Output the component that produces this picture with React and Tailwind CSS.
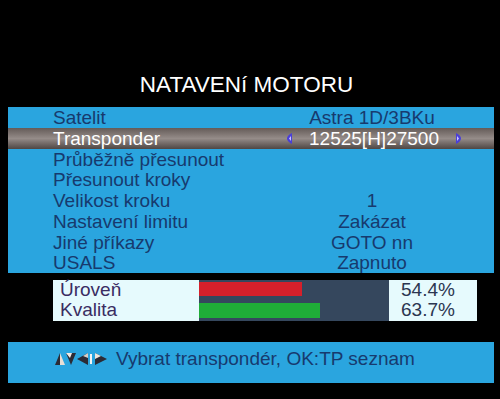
import React from "react";

const rows = [
  { label: "Satelit", value: "Astra 1D/3BKu" },
  { label: "Transponder", value: "12525[H]27500", active: true },
  { label: "Průběžně přesunout", value: "" },
  { label: "Přesunout kroky", value: "" },
  { label: "Velikost kroku", value: "1" },
  { label: "Nastavení limitu", value: "Zakázat" },
  { label: "Jiné příkazy", value: "GOTO nn" },
  { label: "USALS", value: "Zapnuto" },
];

const signal = [
  { label: "Úroveň", value: 54.4, bar: "bg-[#d6202b]", h: "h-[14px]" },
  { label: "Kvalita", value: 63.7, bar: "bg-[#1fad38]", h: "h-[15px]" },
];

const Arrow = ({ dir }) => (
  <svg width="5" height="11" viewBox="0 0 5 11" className="shrink-0">
    {dir === "left" ? (
      <path d="M5 0 C1 2 0 4 0 5.5 C0 7 1 9 5 11 Z" fill="#4a3fd8" />
    ) : (
      <path d="M0 0 C4 2 5 4 5 5.5 C5 7 4 9 0 11 Z" fill="#4a3fd8" />
    )}
    <path
      d={dir === "left" ? "M4 3 L2 5.5 L4 8 Z" : "M1 3 L3 5.5 L1 8 Z"}
      fill="#c9c4ff"
    />
  </svg>
);

const KeyIcons = () => (
  <svg width="54" height="12" viewBox="0 0 54 12" className="shrink-0">
    {/* up */}
    <path d="M5 0 L0 12 L5 12 Z" fill="#2b2b35" />
    <path d="M5 0 L10 12 L5 12 Z" fill="#e9dfd6" />
    {/* down */}
    <path d="M11 0 L21 0 L16 12 Z" fill="#2b2b35" />
    <path d="M11 0 L17 0 L15 5 Z" fill="#f2ece6" />
    {/* left */}
    <path d="M22 6 L33 0 L33 12 Z" fill="#2b2b35" />
    <path d="M28 3 L33 0 L33 5 Z" fill="#d8d0c8" />
    <rect x="35" y="1" width="2" height="10" fill="#f4f4f4" />
    {/* right */}
    <path d="M40 0 L52 6 L40 12 Z" fill="#2b2b35" />
    <path d="M40 0 L46 3 L40 6 Z" fill="#efe6dc" />
  </svg>
);

export default function App() {
  return (
    <div className="w-[500px] h-[399px] bg-black flex flex-col font-['Liberation_Sans',Arial,sans-serif] overflow-hidden">
      <h1 className="mt-[72px] h-[26px] pr-[7px] text-center text-[22.5px] leading-[26px] text-white">
        NATAVENí MOTORU
      </h1>

      {/* Menu */}
      <div className="mt-[9px] ml-2 w-[486px] bg-[#2aa5df] flex flex-col">
        {rows.map((r, i) => (
          <div
            key={i}
            className={`h-[20.75px] grid grid-cols-[282px_164px_1fr] items-center text-[19px] leading-[21px] ${
              r.active
                ? "bg-linear-to-b from-[#645b58] via-[#958c89] to-[#4f4744] text-white"
                : "text-[#173a6e]"
            }`}
          >
            <span className="pl-[45px] whitespace-nowrap">{r.label}</span>
            {r.active ? (
              <div className="flex items-center -ml-[3px] -mr-[7px]">
                <Arrow dir="left" />
                <span className="flex-1 text-center">{r.value}</span>
                <Arrow dir="right" />
              </div>
            ) : (
              <span className="text-center whitespace-nowrap">{r.value}</span>
            )}
            <span />
          </div>
        ))}
      </div>

      {/* Signal */}
      <div className="mt-[7px] ml-[53px] w-[424px] h-[41px] grid grid-cols-[146px_190px_88px] bg-[#e6fafd] text-[19px] leading-[20px]">
        <div className="flex flex-col text-[#3a2d62] pl-[7px]">
          {signal.map((s) => (
            <span key={s.label} className="h-[20px]">
              {s.label}
            </span>
          ))}
        </div>
        <div className="bg-[#35475d] flex flex-col pt-[2px] gap-[7px]">
          {signal.map((s) => (
            <div
              key={s.label}
              className={`${s.bar} ${s.h}`}
              style={{ width: `${s.value}%` }}
            />
          ))}
        </div>
        <div className="flex flex-col text-[#2b3550] pl-[12px]">
          {signal.map((s) => (
            <span key={s.label} className="h-[20px]">
              {s.value.toFixed(1)}%
            </span>
          ))}
        </div>
      </div>

      {/* Help bar */}
      <div className="mt-[21px] ml-2 w-[486px] h-[41px] bg-[#2aa5df] flex items-start pt-[6px] pl-[47px] text-[19px] leading-[21px] text-[#173a6e]">
        <div className="h-[21px] flex items-center">
          <KeyIcons />
        </div>
        <span className="ml-[7px] whitespace-nowrap">
          Vybrat transpondér, OK:TP seznam
        </span>
      </div>
    </div>
  );
}
